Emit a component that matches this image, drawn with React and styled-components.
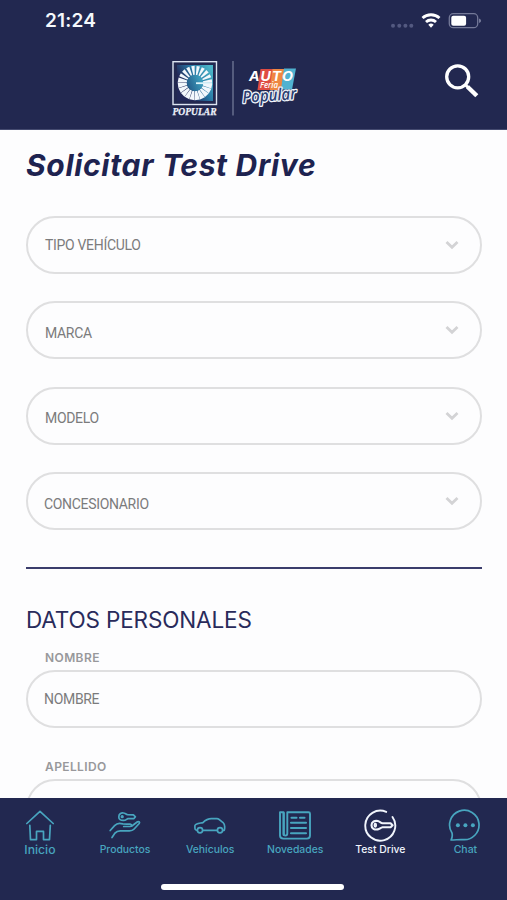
import React from "react";
import styled, { createGlobalStyle } from "styled-components";

const NAVY = "#222850";
const TEAL = "#48a5bf";

const GlobalStyle = createGlobalStyle`
  * { box-sizing: border-box; }
  body { margin: 0; background: #fdfdfe; font-family: Inter, "Liberation Sans", sans-serif; }
`;

const Screen = styled.div`
  display: flex;
  flex-direction: column;
  width: 507px;
  height: 900px;
  overflow: hidden;
  background: #fdfdfe;
`;

const Header = styled.header`
  flex: none;
  height: 130px;
  background: ${NAVY};
  border-bottom: 1px solid #454b70;
`;

const StatusBar = styled.div`
  display: flex;
  justify-content: space-between;
  height: 42px;
  padding: 0 25px 0 45px;
`;

const Clock = styled.time`
  padding-top: 9px;
  font-size: 19px;
  line-height: 24px;
  font-weight: 600;
  letter-spacing: 0.2px;
  color: #f5f8fc;
`;

const StatusIcons = styled.svg`
  display: block;
  width: 94px;
  height: 24px;
  margin-top: 9px;
`;

const BrandBar = styled.div`
  display: grid;
  grid-template-columns: 170px 1fr 64px;
  height: 87px;
`;

const BrandLogo = styled.svg`
  grid-column: 2;
  width: 132px;
  height: 62px;
  margin-top: 16px;
`;

const SearchButton = styled.button`
  align-self: start;
  width: 40px;
  height: 40px;
  margin: 19px 0 0;
  padding: 0;
  border: 0;
  background: none;

  svg { display: block; }
`;

const Form = styled.main`
  flex: 1;
  min-height: 0;
  overflow: hidden;
  padding: 17px 25px 0 26px;
`;

const Title = styled.h1`
  margin: 0 0 32.5px;
  height: 36px;
  font-size: 30px;
  line-height: 36px;
  font-weight: 650;
  font-style: italic;
  letter-spacing: 0.68px;
  white-space: nowrap;
  color: #1e2350;
`;

const SelectList = styled.div`
  display: flex;
  flex-direction: column;
  gap: 27.5px;
`;

const Pill = styled.div`
  display: flex;
  align-items: center;
  justify-content: space-between;
  height: 58px;
  padding: ${(p) => p.$shift || 0}px 20px 0 ${(p) => p.$inset || 17}px;
  border: 2px solid #dfdfe0;
  border-radius: 29px;
  font-family: Roboto, sans-serif;
  font-size: 14px;
  letter-spacing: -0.32px;
  color: #7b7b7c;
`;

const Chevron = styled.svg`
  width: 16px;
  height: 12px;
  margin-top: ${(p) => -(p.$shift || 0)}px;
`;

const Divider = styled.hr`
  height: 2px;
  margin: 36.5px 0 39px;
  border: 0;
  background: #3b3d6c;
`;

const SectionTitle = styled.h2`
  height: 42.5px;
  margin: 0;
  font-size: 22.5px;
  line-height: 24px;
  font-weight: 400;
  letter-spacing: -0.15px;
  white-space: nowrap;
  color: #292b5b;
`;

const Field = styled.div`
  margin-bottom: 31.5px;
`;

const FieldLabel = styled.label`
  display: block;
  height: 19.5px;
  padding-left: 19px;
  font-size: 12px;
  line-height: 16px;
  font-weight: 600;
  letter-spacing: 0.4px;
  color: #98989b;
`;

const TabBar = styled.nav`
  flex: none;
  display: flex;
  flex-direction: column;
  align-items: center;
  height: 102px;
  background: ${NAVY};
`;

const Tabs = styled.div`
  display: flex;
  align-self: flex-start;
  height: 86px;
  margin-left: -2.6px;
`;

const Tab = styled.div`
  display: flex;
  flex: 0 0 85.1px;
  flex-direction: column;
  align-items: center;
  padding-top: 10px;
  font-size: ${(p) => p.$size}px;
  line-height: ${(p) => p.$line || 16}px;
  font-weight: 500;
  white-space: nowrap;
  color: ${(p) => (p.$active ? "#f1f5fc" : TEAL)};

  svg {
    display: block;
    width: 36px;
    height: 34px;
    fill: none;
    stroke: currentColor;
    stroke-width: 1.7;
    stroke-linecap: round;
    stroke-linejoin: round;
  }
`;

const HomeIndicator = styled.div`
  width: 183px;
  height: 6px;
  margin-left: -2px;
  border-radius: 3px;
  background: #fff;
`;

/* Angles run clockwise from the right; the seal's lower rays are wider. */
const rays = Array.from({ length: 20 }, (_, i) => i * 18 + 11);

const Logo = () => (
  <BrandLogo viewBox="170 58 132 62" role="img" aria-label="Popular, Auto Feria Popular">
    <defs>
      <linearGradient id="seal" x1="0" y1="0.8" x2="1" y2="0.2">
        <stop offset="0.25" stopColor="#222858" />
        <stop offset="0.6" stopColor="#2676a3" />
        <stop offset="1" stopColor="#4bb5c8" />
      </linearGradient>
      <linearGradient id="core" x1="0" y1="0.7" x2="1" y2="0.3">
        <stop offset="0" stopColor="#235a88" />
        <stop offset="1" stopColor="#40a6c4" />
      </linearGradient>
    </defs>
    <rect x="173" y="61.7" width="43.5" height="42.8" fill={NAVY} stroke="#dce4f1" strokeWidth="1.4" />
    <rect x="177" y="65" width="36" height="36" fill="url(#seal)" />
    <g fill="#f3f8fc">
      {rays.map((a) => (
        <path
          key={a}
          d={a < 200 ? "M203 82l9.1-1.9v5.2l-9.1-1.3z" : "M203 82.3l9.1-1v3.4l-9.1-1z"}
          transform={`rotate(${a} 195 83)`}
        />
      ))}
    </g>
    <circle cx="195" cy="83" r="8.3" fill="url(#core)" />
    <path d="M196 82.3h16v1.8h-16z" fill="#ddf4fa" />
    <text x="172.5" y="115" textLength="44" lengthAdjust="spacingAndGlyphs" fontFamily="Liberation Serif, serif" fontSize="9.5" fontWeight="700" fontStyle="italic" fill="#eef2fa" stroke="#eef2fa" strokeWidth="0.25">POPULAR</text>
    <path d="M233 61v54.5" stroke="#727997" strokeWidth="1.3" />
    <path d="M260.5 69h13l-4 21h-12z" fill="#df4c43" />
    <path d="M272.5 69h12l-3 21h-12z" fill="#ef8742" />
    <path d="M284 68.5h12l-4 21h-11z" fill="#50b2d0" />
    <g fontStyle="italic" fill="#fff">
      <text x="249" y="80.8" textLength="45" lengthAdjust="spacingAndGlyphs" fontFamily="Inter, sans-serif" fontSize="13" fontWeight="700" letterSpacing="1">AUTO</text>
      <text x="260" y="88" textLength="18" lengthAdjust="spacingAndGlyphs" fontFamily="Open Sans, sans-serif" fontSize="8.5" fontWeight="600">Feria</text>
      <g transform="rotate(-4 270 98)" fontFamily="Open Sans, sans-serif" fontSize="16.5" fontWeight="600">
        <text x="242.5" y="101" textLength="54" lengthAdjust="spacingAndGlyphs" fill="#2b3f72" stroke="#f2f5fa" strokeWidth="2.6" strokeLinejoin="round" paintOrder="stroke">Popular</text>
      </g>
    </g>
  </BrandLogo>
);

const HouseIcon = () => (
  <svg viewBox="0 0 36 34">
    <path d="M4.8 15.5L18 3.3l13.2 12.2M7.8 17.4l.7 14.2h6V23.4h7v8.2h6l.8-14.2" />
  </svg>
);

const HandKeyIcon = () => (
  <svg viewBox="0 0 36 34">
    <path d="M11.8 8.9c0-2.8 2.2-4.2 4.6-3.9 1.9.2 2.5 1.5 4.2 1.6l5.8.2 2 2-1.4 1.8h-5.9c-1.5.2-1.9 1.8-4.5 1.8-3 .1-4.8-1.1-4.8-3.5z" />
    <circle cx="15.2" cy="8.7" r=".8" />
    <path d="M3.2 22.5l4.4-4.9c2.3-2.5 5.4-2.7 8.2-1.7l4 .3h3.4c1.8.2 1.6 2.1 0 2.3h-6.5M24.5 18.2l6-4.4c1.5-.6 2.6.5 1.7 1.7l-5.3 5.8c-1.3 1.4-2.6 1.5-4.5 1.5h-9.2c-2.7 0-4 .8-5.2 2.3l-3 4.4" />
  </svg>
);

const CarIcon = () => (
  <svg viewBox="0 0 36 34">
    <path d="M5.1 22.3c-2.2-.1-2.3-1-2.2-4.7.5-2.1 5-2.3 8-3 2.3-2.2 5.4-3.9 8.5-3.9h5.7c2.3 0 3.6 2.7 6.2 4.1 1.8 1.4 1.6 6 .9 7.5h-1.4M10.8 22.4h14.5" />
    <circle cx="8" cy="22.2" r="2.6" />
    <circle cx="28" cy="22.2" r="2.6" />
  </svg>
);

const NewsIcon = () => (
  <svg viewBox="0 0 36 34">
    <path d="M10.3 4.3h21.2c1 0 1.5.5 1.5 1.5V27.6c0 2-1 3-3 3H6.4c-2.2 0-3.4-1-3.4-3V4.3h3.6V25.6c0 2.7 3.7 2.7 3.7 0z" strokeWidth="1.9" />
    <path d="M6.7 5v22M14.5 9.8h5M23 9.8h4.5M14 14.8h15M14 20h15M14 25.2h15" strokeWidth="2.1" />
  </svg>
);

const TestDriveIcon = () => (
  <svg viewBox="0 0 36 34">
    <path d="M24.2 3.9A15 15 0 1 0 30.5 9" strokeWidth="1.9" />
    <path d="M9.5 17.2c0-3.7 3.5-4.8 6.3-4.2 2 .5 2.8 2 4.8 2.2h8l2 2-2 2.1h-8c-2.1.3-2.8 1.8-4.8 2.1-3.3.6-6.3-.8-6.3-4.2z" strokeWidth="2.1" />
    <ellipse cx="13.3" cy="17.2" rx="0.9" ry="1.6" />
  </svg>
);

const ChatIcon = () => (
  <svg viewBox="0 0 36 34">
    <path d="M5 25A14.7 14.7 0 1 1 15.8 31.6c-3.6-.3-7.1.4-11.7.4 1.1-2.4 1.6-4.3.9-7z" />
    <g fill="currentColor" stroke="none">
      <circle cx="10.9" cy="17.3" r="2" />
      <circle cx="18.4" cy="17.3" r="2" />
      <circle cx="25.9" cy="17.3" r="2" />
    </g>
  </svg>
);

const selects = [
  { label: "TIPO VEHÍCULO", inset: 17, shift: 0 },
  { label: "MARCA", inset: 17, shift: 5 },
  { label: "MODELO", inset: 17, shift: 5 },
  { label: "CONCESIONARIO", inset: 16, shift: 5 },
];

const tabs = [
  { label: "Inicio", Icon: HouseIcon, size: 12.2, line: 15 },
  { label: "Productos", Icon: HandKeyIcon, size: 10.4 },
  { label: "Vehículos", Icon: CarIcon, size: 10.4 },
  { label: "Novedades", Icon: NewsIcon, size: 10.4 },
  { label: "Test Drive", Icon: TestDriveIcon, size: 10.4, active: true },
  { label: "Chat", Icon: ChatIcon, size: 10.5 },
];

export default function App() {
  return (
    <Screen>
      <GlobalStyle />
      <Header>
        <StatusBar>
          <Clock>21:24</Clock>
          <StatusIcons viewBox="388 9 94 24">
            <g fill="#535980">
              <circle cx="393" cy="25.8" r="2" />
              <circle cx="399.3" cy="25.8" r="2" />
              <circle cx="405.4" cy="25.8" r="2" />
              <circle cx="411.3" cy="25.8" r="2" />
            </g>
            <g fill="none" stroke="#fff" strokeWidth="2.8">
              <path d="M422.5 18.1a12.4 12.4 0 0 1 17 0" />
              <path d="M426 22a7.2 7.2 0 0 1 10 0" />
            </g>
            <path d="M428.3 24.8a3.9 3.9 0 0 1 5.4 0L431 27.7z" fill="#fff" />
            <rect x="449.3" y="13.7" width="28.4" height="14" rx="4" fill="none" stroke="#747998" strokeWidth="1.3" />
            <rect x="451.3" y="15.7" width="14.8" height="10" rx="2" fill="#fff" />
            <path d="M479 18.5c2.8.8 2.8 3.7 0 4.5z" fill="#747998" />
          </StatusIcons>
        </StatusBar>
        <BrandBar>
          <Logo />
          <SearchButton aria-label="Buscar">
            <svg width="40" height="40" viewBox="443 61 40 40" fill="none" stroke="#fff">
              <circle cx="457.7" cy="76.8" r="11" strokeWidth="3.3" />
              <path d="M465.8 85.3l2.3 2" strokeWidth="3" />
              <path d="M467.5 86.7l9.3 9.1" strokeWidth="4.4" />
            </svg>
          </SearchButton>
        </BrandBar>
      </Header>
      <Form>
        <Title>Solicitar Test Drive</Title>
        <SelectList>
          {selects.map(({ label, inset, shift }) => (
            <Pill key={label} $inset={inset} $shift={shift}>
              {label}
              <Chevron $shift={shift} viewBox="0 0 16 12">
                <path d="M2.5 3L8 8.2 13.5 3" fill="none" stroke="#d3d3d5" strokeWidth="2.8" />
              </Chevron>
            </Pill>
          ))}
        </SelectList>
        <Divider />
        <SectionTitle>DATOS PERSONALES</SectionTitle>
        <Field>
          <FieldLabel>NOMBRE</FieldLabel>
          <Pill $inset={16}>NOMBRE</Pill>
        </Field>
        <Field>
          <FieldLabel>APELLIDO</FieldLabel>
          <Pill />
        </Field>
      </Form>
      <TabBar>
        <Tabs>
          {tabs.map(({ label, Icon, size, line, active }) => (
            <Tab key={label} $size={size} $line={line} $active={active}>
              <Icon />
              {label}
            </Tab>
          ))}
        </Tabs>
        <HomeIndicator />
      </TabBar>
    </Screen>
  );
}
